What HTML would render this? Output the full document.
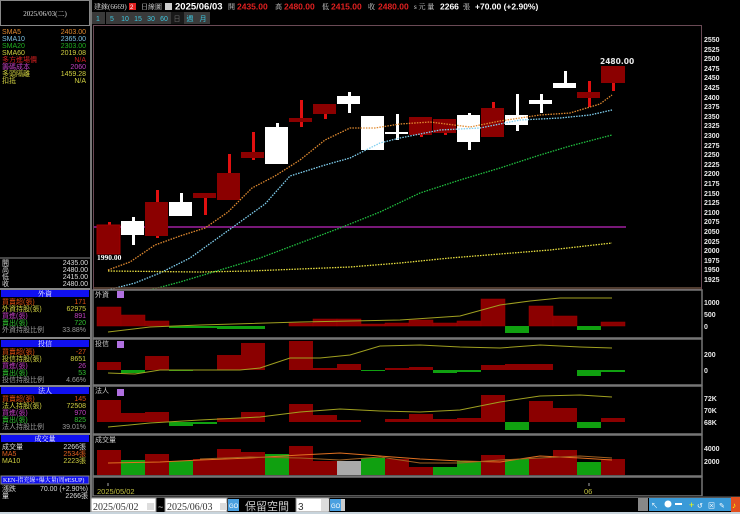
<!DOCTYPE html>
<html><head><meta charset="utf-8"><style>
html,body{margin:0;padding:0;background:#000;width:740px;height:514px;overflow:hidden}
svg{display:block}
text{font-family:"Liberation Sans","Noto Sans CJK TC",sans-serif;font-size:7px}
.s{font-family:"Liberation Serif","Noto Serif CJK SC","Noto Sans CJK TC",serif;font-size:7px}
.ax{fill:#e8e8e8;font-size:7.5px;font-weight:bold;font-family:"DejaVu Sans",sans-serif}
</style></head><body>
<svg width="740" height="514" viewBox="0 0 740 514" xmlns="http://www.w3.org/2000/svg">
<rect width="740" height="514" fill="#000"/>
<!-- left panel -->
<rect x="0.5" y="0.5" width="89" height="25" fill="#000" stroke="#888"/>
<text x="45" y="16" fill="#ddd" text-anchor="middle" class="s">2025/06/03(二)</text>
<g class="s">
<text x="2" y="34" fill="#e08a30">SMA5</text><text x="86" y="34" fill="#e08a30" text-anchor="end">2403.00</text>
<text x="2" y="41" fill="#7cc0e0">SMA10</text><text x="86" y="41" fill="#7cc0e0" text-anchor="end">2365.00</text>
<text x="2" y="48" fill="#20b020">SMA20</text><text x="86" y="48" fill="#20b020" text-anchor="end">2303.00</text>
<text x="2" y="55" fill="#d0d040">SMA60</text><text x="86" y="55" fill="#d0d040" text-anchor="end">2019.08</text>
<text x="2" y="62" fill="#d02020">多方進場價</text><text x="86" y="62" fill="#d02020" text-anchor="end">N/A</text>
<text x="2" y="69" fill="#c040c0">籌碼成本</text><text x="86" y="69" fill="#c040c0" text-anchor="end">2060</text>
<text x="2" y="76" fill="#d0d040">多頭隔離</text><text x="86" y="76" fill="#d0d040" text-anchor="end">1459.28</text>
<text x="2" y="83" fill="#d0d040">扣抵</text><text x="86" y="83" fill="#d0d040" text-anchor="end">N/A</text>
</g>
<line x1="0" y1="258" x2="90" y2="258" stroke="#888"/>
<g class="s" fill="#ddd">
<text x="2" y="265">開</text><text x="88" y="265" text-anchor="end">2435.00</text>
<text x="2" y="272">高</text><text x="88" y="272" text-anchor="end">2480.00</text>
<text x="2" y="279">低</text><text x="88" y="279" text-anchor="end">2415.00</text>
<text x="2" y="286">收</text><text x="88" y="286" text-anchor="end">2480.00</text>
</g>
<line x1="0" y1="289" x2="90" y2="289" stroke="#888" stroke-width="2"/>
<!-- 外資 -->
<rect x="1" y="290" width="88" height="7" fill="#1010f0"/><text x="45" y="296" fill="#fff" text-anchor="middle" class="s">外資</text>
<g class="s"><text x="2" y="304" fill="#e05010">買賣超(張)</text><text x="86" y="304" fill="#e05010" text-anchor="end">171</text>
<text x="2" y="311" fill="#d0d040">外資持股(張)</text><text x="86" y="311" fill="#d0d040" text-anchor="end">62975</text>
<text x="2" y="318" fill="#c040c0">買進(張)</text><text x="86" y="318" fill="#c040c0" text-anchor="end">891</text>
<text x="2" y="325" fill="#30c030">賣出(張)</text><text x="86" y="325" fill="#30c030" text-anchor="end">720</text>
<text x="2" y="332" fill="#999">外資持股比例</text><text x="86" y="332" fill="#999" text-anchor="end">33.88%</text></g>
<line x1="0" y1="338" x2="90" y2="338" stroke="#888" stroke-width="2"/>
<rect x="1" y="340" width="88" height="7" fill="#1010f0"/><text x="45" y="346" fill="#fff" text-anchor="middle" class="s">投信</text>
<g class="s"><text x="2" y="354" fill="#e05010">買賣超(張)</text><text x="86" y="354" fill="#e05010" text-anchor="end">-27</text>
<text x="2" y="361" fill="#d0d040">投信持股(張)</text><text x="86" y="361" fill="#d0d040" text-anchor="end">8651</text>
<text x="2" y="368" fill="#c040c0">買進(張)</text><text x="86" y="368" fill="#c040c0" text-anchor="end">26</text>
<text x="2" y="375" fill="#30c030">賣出(張)</text><text x="86" y="375" fill="#30c030" text-anchor="end">53</text>
<text x="2" y="382" fill="#999">投信持股比例</text><text x="86" y="382" fill="#999" text-anchor="end">4.66%</text></g>
<line x1="0" y1="386" x2="90" y2="386" stroke="#888" stroke-width="2"/>
<rect x="1" y="387" width="88" height="7" fill="#1010f0"/><text x="45" y="393" fill="#fff" text-anchor="middle" class="s">法人</text>
<g class="s"><text x="2" y="401" fill="#e05010">買賣超(張)</text><text x="86" y="401" fill="#e05010" text-anchor="end">145</text>
<text x="2" y="408" fill="#d0d040">法人持股(張)</text><text x="86" y="408" fill="#d0d040" text-anchor="end">72508</text>
<text x="2" y="415" fill="#c040c0">買進(張)</text><text x="86" y="415" fill="#c040c0" text-anchor="end">970</text>
<text x="2" y="422" fill="#30c030">賣出(張)</text><text x="86" y="422" fill="#30c030" text-anchor="end">825</text>
<text x="2" y="429" fill="#999">法人持股比例</text><text x="86" y="429" fill="#999" text-anchor="end">39.01%</text></g>
<line x1="0" y1="434" x2="90" y2="434" stroke="#888" stroke-width="2"/>
<rect x="1" y="435" width="88" height="7" fill="#1010f0"/><text x="45" y="441" fill="#fff" text-anchor="middle" class="s">成交量</text>
<g class="s"><text x="2" y="449" fill="#ddd">成交量</text><text x="86" y="449" fill="#ddd" text-anchor="end">2266張</text>
<text x="2" y="456" fill="#e06020">MA5</text><text x="86" y="456" fill="#e06020" text-anchor="end">2534張</text>
<text x="2" y="463" fill="#d0d040">MA10</text><text x="86" y="463" fill="#d0d040" text-anchor="end">2223張</text></g>
<rect x="1" y="476" width="88" height="8" fill="#1010f0" stroke="#888"/><text x="3" y="482" fill="#fff" class="s" style="font-size:6px">KEN-指充線+爆大量(周#ESUP)</text>
<g class="s"><text x="2" y="491" fill="#ddd">漲跌</text><text x="88" y="491" fill="#ddd" text-anchor="end">70.00 (+2.90%)</text>
<text x="2" y="498" fill="#ddd">量</text><text x="88" y="498" fill="#ddd" text-anchor="end">2266張</text></g>
<rect x="90" y="0" width="2" height="514" fill="#777"/>
<!-- header -->
<text x="94" y="9" fill="#ddd" class="s">建錸(6669)</text>
<rect x="129" y="3" width="7" height="7" fill="#e02020"/><text x="130" y="9" fill="#fff" style="font-size:6px">2</text>
<text x="141" y="9" fill="#ddd" class="s">日線圖</text>
<rect x="165" y="3" width="7" height="7" fill="#ccc"/>
<text x="175" y="9.5" fill="#fff" style="font-size:9.5px;font-weight:bold">2025/06/03</text>
<text x="228" y="9" fill="#ddd" class="s">開</text><text x="237" y="9.5" fill="#e02020" style="font-size:8.5px;font-weight:bold">2435.00</text>
<text x="275" y="9" fill="#ddd" class="s">高</text><text x="284" y="9.5" fill="#e02020" style="font-size:8.5px;font-weight:bold">2480.00</text>
<text x="322" y="9" fill="#ddd" class="s">低</text><text x="331" y="9.5" fill="#e02020" style="font-size:8.5px;font-weight:bold">2415.00</text>
<text x="368" y="9" fill="#ddd" class="s">收</text><text x="378" y="9.5" fill="#e02020" style="font-size:8.5px;font-weight:bold">2480.00</text>
<text x="414" y="9" fill="#ddd" class="s">s 元  量</text>
<text x="440" y="9.5" fill="#fff" style="font-size:8.5px;font-weight:bold">2266</text><text x="463" y="9" fill="#ddd" class="s">張</text>
<text x="475" y="9.5" fill="#fff" style="font-size:8.5px;font-weight:bold">+70.00 (+2.90%)</text>
<!-- tabs -->
<g>
<rect x="92" y="12" width="13" height="12" fill="#3a3a3a"/><rect x="106" y="12" width="13" height="12" fill="#3a3a3a"/>
<rect x="119" y="12" width="13" height="12" fill="#3a3a3a"/><rect x="132" y="12" width="13" height="12" fill="#3a3a3a"/>
<rect x="145" y="12" width="13" height="12" fill="#3a3a3a"/><rect x="158" y="12" width="13" height="12" fill="#3a3a3a"/>
<rect x="171" y="12" width="13" height="12" fill="#181818"/><rect x="184" y="12" width="13" height="12" fill="#3a3a3a"/><rect x="197" y="12" width="13" height="12" fill="#3a3a3a"/>
<g fill="#3ec8e0" class="s" style="font-size:8px" text-anchor="middle">
<text x="98" y="21">1</text><text x="112" y="21">5</text><text x="125" y="21">10</text><text x="138" y="21">15</text><text x="151" y="21">30</text><text x="164" y="21">60</text>
<text x="177" y="21" fill="#666">日</text><text x="190" y="21">週</text><text x="203" y="21">月</text></g>
</g>
<!-- main frame -->
<rect x="93.5" y="25.5" width="608" height="264" fill="none" stroke="#6a4a55"/>
<g class="ax">
<text x="704" y="42">2550</text><text x="704" y="52">2525</text><text x="704" y="61">2500</text><text x="704" y="71">2475</text><text x="704" y="80">2450</text><text x="704" y="90">2425</text><text x="704" y="100">2400</text><text x="704" y="109">2375</text><text x="704" y="119">2350</text><text x="704" y="128">2325</text><text x="704" y="138">2300</text><text x="704" y="148">2275</text><text x="704" y="157">2250</text><text x="704" y="167">2225</text><text x="704" y="176">2200</text><text x="704" y="186">2175</text><text x="704" y="196">2150</text><text x="704" y="205">2125</text><text x="704" y="215">2100</text><text x="704" y="224">2075</text><text x="704" y="234">2050</text><text x="704" y="244">2025</text><text x="704" y="253">2000</text><text x="704" y="263">1975</text><text x="704" y="272">1950</text><text x="704" y="282">1925</text>
</g>
<line x1="94" y1="227" x2="626" y2="227" stroke="#a020a0" stroke-width="1.5"/>
<!-- candles -->
<g>
<rect x="108" y="222" width="3" height="4" fill="#e01010"/><rect x="97" y="225" width="23" height="29" fill="#8b0000" stroke="#a00000"/>
<rect x="132" y="217" width="3" height="28" fill="#fff"/><rect x="121" y="221" width="23" height="14" fill="#fff"/>
<rect x="156" y="190" width="3" height="48" fill="#e01010"/><rect x="145" y="202" width="23" height="34" fill="#8b0000"/>
<rect x="180" y="193" width="3" height="10" fill="#fff"/><rect x="169" y="202" width="23" height="14" fill="#fff"/>
<rect x="204" y="193" width="3" height="22" fill="#e01010"/><rect x="193" y="193" width="23" height="5" fill="#8b0000"/>
<rect x="228" y="154" width="3" height="46" fill="#e01010"/><rect x="217" y="173" width="23" height="27" fill="#8b0000"/>
<rect x="252" y="132" width="3" height="28" fill="#e01010"/><rect x="241" y="152" width="23" height="6" fill="#8b0000"/>
<rect x="276" y="123" width="3" height="5" fill="#fff"/><rect x="265" y="127" width="23" height="37" fill="#fff"/>
<rect x="300" y="100" width="3" height="27" fill="#e01010"/><rect x="289" y="118" width="23" height="4" fill="#8b0000"/>
<rect x="324" y="104" width="3" height="15" fill="#e01010"/><rect x="313" y="104" width="23" height="10" fill="#8b0000"/>
<rect x="348" y="92" width="3" height="21" fill="#fff"/><rect x="337" y="96" width="23" height="8" fill="#fff"/>
<rect x="361" y="116" width="23" height="34" fill="#fff"/>
<rect x="396" y="114" width="3" height="26" fill="#fff"/><rect x="385" y="132" width="23" height="2" fill="#fff"/>
<rect x="420" y="117" width="3" height="20" fill="#e01010"/><rect x="409" y="117" width="23" height="18" fill="#8b0000"/>
<rect x="444" y="119" width="3" height="16" fill="#e01010"/><rect x="433" y="119" width="23" height="14" fill="#8b0000"/>
<rect x="468" y="113" width="3" height="37" fill="#fff"/><rect x="457" y="115" width="23" height="27" fill="#fff"/>
<rect x="492" y="102" width="3" height="8" fill="#e01010"/><rect x="481" y="108" width="23" height="29" fill="#8b0000"/>
<rect x="516" y="94" width="3" height="37" fill="#fff"/><rect x="505" y="115" width="23" height="10" fill="#fff"/>
<rect x="540" y="94" width="3" height="19" fill="#fff"/><rect x="529" y="100" width="23" height="4" fill="#fff"/>
<rect x="564" y="71" width="3" height="13" fill="#fff"/><rect x="553" y="83" width="23" height="5" fill="#fff"/>
<rect x="588" y="81" width="3" height="26" fill="#e01010"/><rect x="577" y="92" width="23" height="6" fill="#8b0000"/>
<rect x="612" y="82" width="3" height="9" fill="#e01010"/><rect x="601" y="66" width="24" height="17" fill="#8b0000"/>
</g>
<text x="600" y="64" fill="#fff" class="ax">2480.00</text>
<text x="97" y="260" fill="#fff" class="s" style="font-size:7.5px;font-weight:bold">1990.00</text>
<!-- MA lines -->
<g fill="none" stroke-width="1.3" stroke-dasharray="1.5 1.2">
<polyline stroke="#e08a30" points="108,270 130,262 155,245 180,236 205,228 228,212 252,188 275,176 300,160 325,140 350,128 375,128 400,124 430,122 470,127 500,121 540,115 570,113 600,104 612,95"/>
<polyline stroke="#80d0f0" points="108,290 135,283 160,273 190,258 215,240 240,222 265,204 290,176 325,165 350,158 380,143 400,138 440,130 480,128 520,120 560,118 590,115 612,110"/>
<polyline stroke="#20c040" points="150,290 180,282 220,270 260,258 300,243 340,228 380,212 420,193 460,180 500,168 540,155 570,146 612,135"/>
<polyline stroke="#e8e040" points="108,271 200,272 250,271 300,269 350,267 400,263 450,258 500,254 550,250 612,243"/>
</g>
<line x1="94" y1="288" x2="701" y2="288" stroke="#6a5040" stroke-width="1.5"/>
<!-- sub panels frames -->
<g fill="none" stroke="#777" stroke-width="1.5">
<rect x="93" y="290" width="609" height="48"/><rect x="93" y="339" width="609" height="46"/><rect x="93" y="386" width="609" height="48"/><rect x="93" y="435" width="609" height="41"/>
<rect x="93" y="477" width="609" height="19"/>
</g>
<g class="s" fill="#ccc"><text x="95" y="297">外資</text><text x="95" y="346">投信</text><text x="95" y="393">法人</text><text x="95" y="442">成交量</text></g>
<g fill="#b070e0"><rect x="117" y="291" width="7" height="7"/><rect x="117" y="341" width="7" height="7"/><rect x="117" y="389" width="7" height="7"/></g>
<g class="ax"><text x="704" y="305">1000</text><text x="704" y="317">500</text><text x="704" y="329">0</text>
<text x="704" y="357">200</text><text x="704" y="373">0</text>
<text x="704" y="401">72K</text><text x="704" y="413">70K</text><text x="704" y="425">68K</text>
<text x="704" y="451">4000</text><text x="704" y="464">2000</text></g>
<!-- 外資 bars zero 326 -->
<g fill="#8b0000" stroke="#a00000" stroke-width="0.5">
<rect x="97" y="307" width="24" height="19"/><rect x="121" y="315" width="24" height="11"/><rect x="145" y="321" width="24" height="5"/>
<rect x="289" y="323" width="24" height="3"/><rect x="313" y="319" width="24" height="7"/><rect x="337" y="319" width="24" height="7"/><rect x="361" y="324" width="24" height="2"/>
<rect x="385" y="323" width="24" height="3"/><rect x="409" y="320" width="24" height="6"/><rect x="433" y="323" width="24" height="3"/><rect x="457" y="321" width="24" height="5"/>
<rect x="481" y="299" width="24" height="27"/><rect x="529" y="306" width="24" height="20"/><rect x="553" y="316" width="24" height="10"/><rect x="601" y="322" width="24" height="4"/>
</g>
<g fill="#10a010"><rect x="169" y="326" width="24" height="2"/><rect x="193" y="326" width="24" height="2"/><rect x="217" y="326" width="24" height="3"/><rect x="241" y="326" width="24" height="3"/><rect x="505" y="326" width="24" height="7"/><rect x="577" y="326" width="24" height="4"/></g>
<polyline fill="none" stroke="#a0a020" stroke-width="1" points="108,332 150,327 200,325 300,322 400,320 460,316 500,305 530,301 560,298 612,298"/>
<!-- 投信 zero 370 -->
<g fill="#8b0000">
<rect x="97" y="362" width="24" height="8"/><rect x="145" y="356" width="24" height="14"/><rect x="217" y="355" width="24" height="15"/><rect x="241" y="343" width="24" height="27"/>
<rect x="289" y="341" width="24" height="29"/><rect x="313" y="368" width="24" height="2"/><rect x="337" y="364" width="24" height="6"/>
<rect x="385" y="368" width="24" height="2"/><rect x="409" y="367" width="24" height="3"/><rect x="481" y="365" width="24" height="5"/><rect x="505" y="364" width="24" height="6"/><rect x="529" y="364" width="24" height="6"/>
</g>
<g fill="#10a010"><rect x="121" y="370" width="24" height="3"/><rect x="169" y="370" width="24" height="1"/><rect x="361" y="370" width="24" height="1"/><rect x="433" y="370" width="24" height="3"/><rect x="457" y="370" width="24" height="2"/><rect x="577" y="370" width="24" height="6"/><rect x="601" y="370" width="24" height="2"/></g>
<polyline fill="none" stroke="#a0a020" stroke-width="1" points="108,373 135,374 160,370 240,370 260,368 290,358 320,358 350,355 380,346 420,345 460,347 500,348 540,345 580,347 612,348"/>
<!-- 法人 zero 422 -->
<g fill="#8b0000">
<rect x="97" y="400" width="24" height="22"/><rect x="121" y="413" width="24" height="9"/><rect x="145" y="412" width="24" height="10"/>
<rect x="217" y="418" width="24" height="4"/><rect x="241" y="412" width="24" height="10"/><rect x="289" y="404" width="24" height="18"/><rect x="313" y="415" width="24" height="7"/><rect x="337" y="420" width="24" height="2"/>
<rect x="385" y="419" width="24" height="3"/><rect x="409" y="414" width="24" height="8"/><rect x="433" y="419" width="24" height="3"/><rect x="457" y="418" width="24" height="4"/>
<rect x="481" y="395" width="24" height="27"/><rect x="529" y="401" width="24" height="21"/><rect x="553" y="408" width="24" height="14"/><rect x="601" y="418" width="24" height="4"/>
</g>
<g fill="#10a010"><rect x="169" y="422" width="24" height="4"/><rect x="193" y="422" width="24" height="2"/><rect x="505" y="422" width="24" height="8"/><rect x="577" y="422" width="24" height="6"/></g>
<polyline fill="none" stroke="#a0a020" stroke-width="1" points="108,427 150,423 200,420 260,417 300,412 340,409 380,411 420,412 460,410 500,402 540,396 580,395 612,397"/>
<!-- volume bottom 475 -->
<g>
<rect x="97" y="450" width="24" height="25" fill="#8b0000"/><rect x="121" y="460" width="24" height="15" fill="#10a010"/><rect x="145" y="454" width="24" height="21" fill="#8b0000"/><rect x="169" y="461" width="24" height="14" fill="#10a010"/>
<rect x="193" y="459" width="24" height="16" fill="#8b0000"/><rect x="217" y="449" width="24" height="26" fill="#8b0000"/><rect x="241" y="452" width="24" height="23" fill="#8b0000"/><rect x="265" y="454" width="24" height="21" fill="#10a010"/>
<rect x="289" y="446" width="24" height="29" fill="#8b0000"/><rect x="313" y="461" width="24" height="14" fill="#8b0000"/><rect x="337" y="461" width="24" height="14" fill="#aaa"/><rect x="361" y="458" width="24" height="17" fill="#10a010"/>
<rect x="385" y="459" width="24" height="16" fill="#8b0000"/><rect x="409" y="467" width="24" height="8" fill="#8b0000"/><rect x="433" y="467" width="24" height="8" fill="#10a010"/><rect x="457" y="461" width="24" height="14" fill="#10a010"/>
<rect x="481" y="455" width="24" height="20" fill="#8b0000"/><rect x="505" y="459" width="24" height="16" fill="#10a010"/><rect x="529" y="458" width="24" height="17" fill="#8b0000"/><rect x="553" y="450" width="24" height="25" fill="#8b0000"/>
<rect x="577" y="462" width="24" height="13" fill="#10a010"/><rect x="601" y="459" width="24" height="16" fill="#8b0000"/>
</g>
<polyline fill="none" stroke="#e07020" stroke-width="1" points="108,463 160,462 200,460 250,458 300,455 340,453 380,456 420,459 460,461 500,462 540,456 580,458 612,460"/>
<polyline fill="none" stroke="#a06020" stroke-width="1" points="200,459 250,457 300,458 340,460 380,457 420,463 460,463 500,460 540,458 580,456 612,458"/>
<!-- date row -->
<line x1="108" y1="483" x2="108" y2="486" stroke="#aaa"/><line x1="589" y1="483" x2="589" y2="486" stroke="#aaa"/>
<text x="97" y="494" fill="#c0c040" style="font-size:7.5px">2025/05/02</text>
<text x="584" y="494" fill="#c0c040" style="font-size:7.5px">06</text>
<!-- bottom bar -->
<rect x="92" y="497" width="648" height="17" fill="#000"/>
<rect x="92" y="497" width="648" height="1" fill="#555"/>
<rect x="91" y="498" width="65" height="14" fill="#fff" stroke="#888"/><text x="93" y="510" fill="#333" class="s" style="font-size:10px">2025/05/02</text>
<rect x="147" y="503" width="7" height="7" fill="#ddd"/>
<text x="158" y="510" fill="#ccc" style="font-size:9px">~</text>
<rect x="165" y="498" width="62" height="14" fill="#fff" stroke="#888"/><text x="167" y="510" fill="#333" class="s" style="font-size:10px">2025/06/03</text>
<rect x="220" y="503" width="7" height="7" fill="#ddd"/>
<rect x="228" y="499" width="11" height="12" fill="#4aa0e0"/><text x="229" y="508" fill="#fff" style="font-size:6px">GO</text>
<text x="245" y="510" fill="#ccc" style="font-size:11px;font-family:'Noto Sans CJK TC',sans-serif">保留空間</text>
<rect x="296" y="498" width="33" height="14" fill="#fff" stroke="#888"/><text x="298" y="510" fill="#333" style="font-size:10px">3</text>
<rect x="321" y="499" width="8" height="12" fill="#ddd"/>
<rect x="330" y="499" width="11" height="12" fill="#4aa0e0"/><text x="331" y="508" fill="#fff" style="font-size:6px">GO</text>
<rect x="341" y="499" width="4" height="12" fill="#ccc"/>
<rect x="92" y="496" width="648" height="1" fill="#333"/>
<rect x="638" y="498" width="10" height="13" fill="#888"/>
<g fill="#3a9ad8"><rect x="649" y="498" width="84" height="13"/></g>
<g fill="#fff" style="font-size:8px"><text x="651" y="508">↖</text><circle cx="668" cy="504" r="3.5"/><rect x="675" y="503" width="7" height="2"/><text x="689" y="508" fill="#ff0" style="font-size:9px">+</text><text x="697" y="508">↺</text><text x="708" y="508">⊠</text><text x="719" y="508">✎</text></g>
<rect x="731" y="497" width="9" height="15" fill="#e05020"/><text x="732" y="508" fill="#ff0" style="font-size:8px">♪</text>
<rect x="0" y="512" width="740" height="2" fill="#c8d4dc"/>
</svg>
</body></html>
